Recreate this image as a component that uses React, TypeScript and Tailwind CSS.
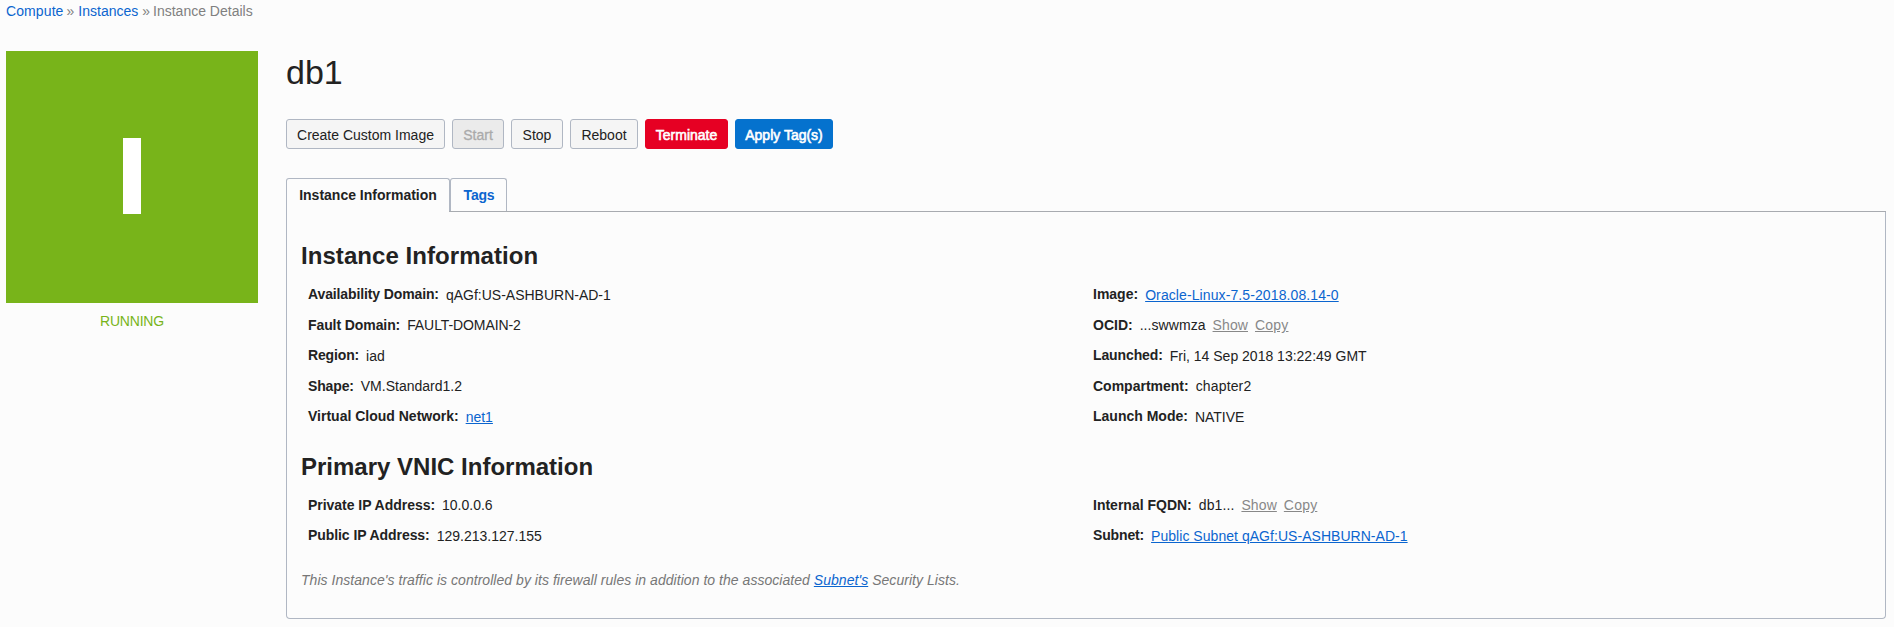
import type { ReactNode } from 'react';

function Row({ label, track = '', children }: { label: string; track?: string; children: ReactNode }) {
  return (
    <div className="flex h-[30.5px] items-start whitespace-nowrap">
      <span className={`mr-[7px] font-bold text-[#222] ${track}`}>{label}</span>
      <span className="flex gap-[7px] pt-[0.5px]">{children}</span>
    </div>
  );
}

function Link({ children, track = '', muted = false }: { children: ReactNode; track?: string; muted?: boolean }) {
  return (
    <a className={`underline underline-offset-1 ${muted ? 'text-[#888]' : 'text-[#0b65cf]'} ${track}`}>{children}</a>
  );
}

function Button({ children, className }: { children: ReactNode; className: string }) {
  return (
    <button className={`flex h-[30px] items-center justify-center whitespace-nowrap rounded-[3px] border pt-px ${className}`}>
      {children}
    </button>
  );
}

function ShowCopy() {
  return (
    <>
      <Link muted track="tracking-[0.1px]">Show</Link>
      <Link muted track="tracking-[0.2px]">Copy</Link>
    </>
  );
}

const plain = 'border-[#b0b7c3] bg-[#f5f5f5] text-[#222]';

export default function App() {
  return (
    <div className="h-[627px] w-[1894px] overflow-hidden bg-[#fcfcfc] font-['Liberation_Sans',Arial,sans-serif] text-[14px] leading-[20px] text-[#222]">
      <nav className="flex h-[51px] gap-[4px] pl-[6px] pt-px text-[#808080]">
        <a className="tracking-[0.1px] text-[#0b65cf]">Compute</a>
        <span className="-ml-px">»</span>
        <a className="text-[#0b65cf]">Instances</a>
        <span className="-mr-px">»</span>
        <span>Instance Details</span>
      </nav>
      <div className="flex pl-[6px]">
        <aside className="w-[252px] text-center">
          <div className="flex h-[252px] items-center justify-center bg-[#78b41a]">
            <div className="mb-[3px] h-[76px] w-[18px] bg-white" />
          </div>
          <div className="mt-[8px] tracking-[-0.2px] text-[#78b41a]">RUNNING</div>
        </aside>
        <main className="ml-[28px] w-[1600px]">
          <h1 className="h-[68px] pt-px text-[34px] leading-[40px]">db1</h1>
          <div className="flex gap-[7px]">
            <Button className={`w-[159px] ${plain}`}>Create Custom Image</Button>
            <Button className="w-[52px] border-[#b0b7c3] bg-[#ebebeb] text-[#aaa] [-webkit-text-stroke:0.3px_#aaa]">Start</Button>
            <Button className={`w-[52px] ${plain}`}>Stop</Button>
            <Button className={`w-[68px] ${plain}`}>Reboot</Button>
            <Button className="w-[83px] border-[#e60023] bg-[#e60023] text-white [-webkit-text-stroke:0.6px_white]">Terminate</Button>
            <Button className="w-[98px] border-[#0572ce] bg-[#0572ce] text-white [-webkit-text-stroke:0.6px_white]">Apply Tag(s)</Button>
          </div>
          <div className="mt-[29px] flex h-[33px] font-bold">
            <div className="flex w-[164px] items-center justify-center rounded-t-[3px] border border-b-0 border-[#b0b7c3]">Instance Information</div>
            <div className="flex w-[57px] items-center justify-center rounded-t-[3px] border border-b-0 border-[#b0b7c3] pl-px tracking-[-0.2px] text-[#0b65cf]">Tags</div>
          </div>
          <div className="flex">
            <div className="h-px w-[163px] border-l border-[#b0b7c3]" />
            <div className="h-px flex-1 bg-[#a8abb0]" />
          </div>
          <section className="h-[407px] rounded-b-[4px] border border-t-0 border-[#b0b7c3] pl-[14px]">
            <h2 className="h-[72.4px] pt-[29px] text-[24px] font-bold leading-[30px] tracking-[0.06px]">Instance Information</h2>
            <div className="flex pl-[7px]">
              <div className="w-[785px]">
                <Row label="Availability Domain:" track="tracking-[-0.12px]">qAGf:US-ASHBURN-AD-1</Row>
                <Row label="Fault Domain:" track="tracking-[-0.09px]"><span className="tracking-[-0.09px]">FAULT-DOMAIN-2</span></Row>
                <Row label="Region:" track="tracking-[-0.15px]">iad</Row>
                <Row label="Shape:" track="tracking-[-0.15px]">VM.Standard1.2</Row>
                <Row label="Virtual Cloud Network:"><Link>net1</Link></Row>
              </div>
              <div>
                <Row label="Image:"><Link track="tracking-[0.1px]">Oracle-Linux-7.5-2018.08.14-0</Link></Row>
                <Row label="OCID:"><span className="tracking-[0.06px]">...swwmza</span><ShowCopy /></Row>
                <Row label="Launched:" track="tracking-[-0.12px]">Fri, 14 Sep 2018 13:22:49 GMT</Row>
                <Row label="Compartment:"><span className="tracking-[0.15px]">chapter2</span></Row>
                <Row label="Launch Mode:">NATIVE</Row>
              </div>
            </div>
            <h2 className="h-[58px] pt-[15.2px] text-[24px] font-bold leading-[30px]">Primary VNIC Information</h2>
            <div className="flex pl-[7px]">
              <div className="w-[785px]">
                <Row label="Private IP Address:" track="tracking-[-0.03px]">10.0.0.6</Row>
                <Row label="Public IP Address:" track="tracking-[-0.07px]">129.213.127.155</Row>
              </div>
              <div>
                <Row label="Internal FQDN:"><span className="tracking-[0.1px]">db1...</span><ShowCopy /></Row>
                <Row label="Subnet:" track="tracking-[-0.15px]"><Link track="tracking-[0.04px]">Public Subnet qAGf:US-ASHBURN-AD-1</Link></Row>
              </div>
            </div>
            <p className="mt-[14px] italic tracking-[0.04px] text-[#777]">
              This Instance's traffic is controlled by its firewall rules in addition to the associated <Link>Subnet's</Link> Security Lists.
            </p>
          </section>
        </main>
      </div>
    </div>
  );
}
